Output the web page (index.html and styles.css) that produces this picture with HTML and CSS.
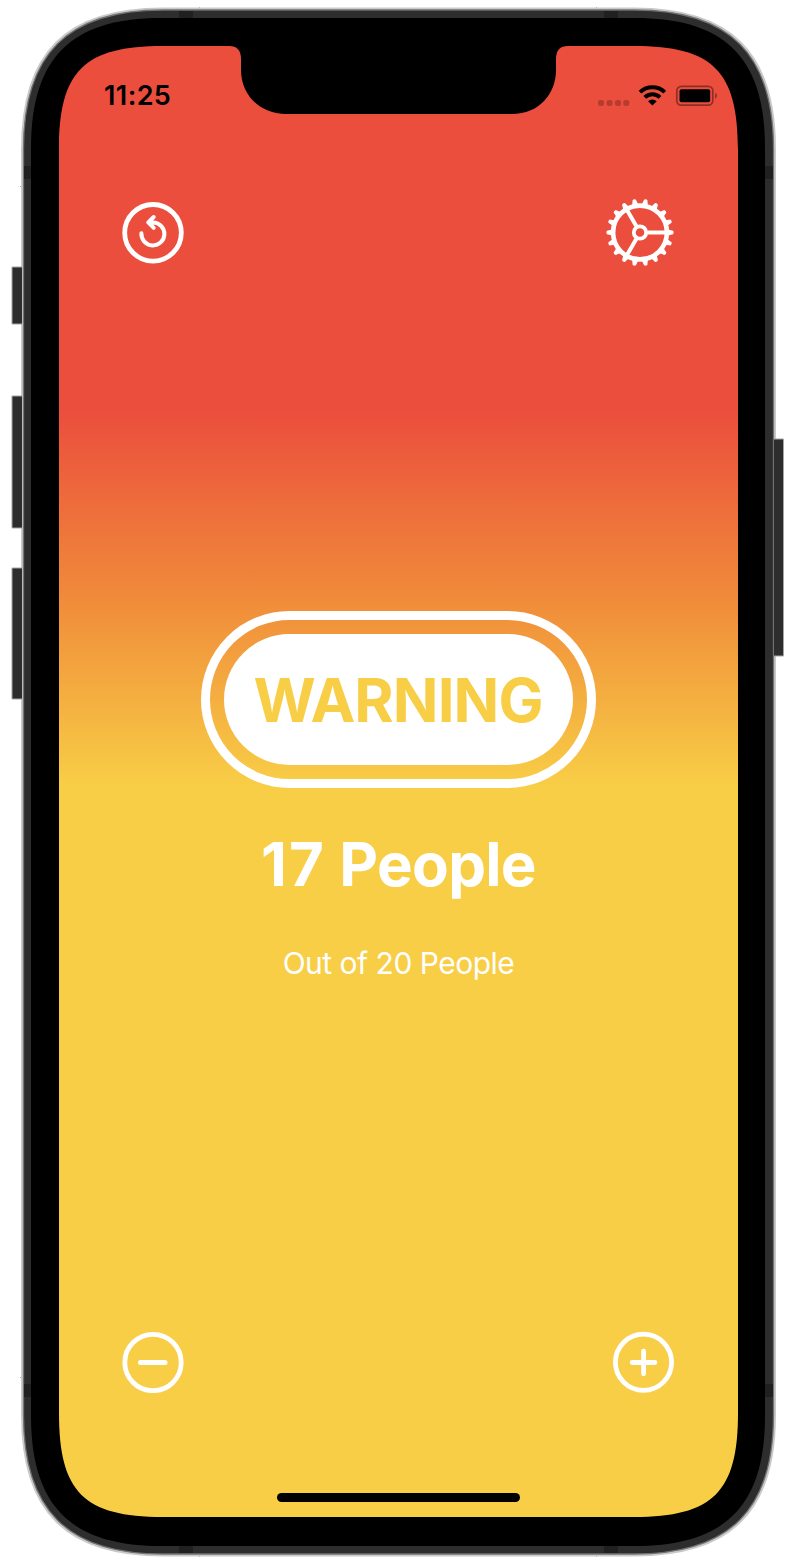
FILE: index.html
```html
<!DOCTYPE html>
<html lang="en">
<head>
<meta charset="utf-8">
<title>People Counter</title>
<link rel="stylesheet" href="styles.css">
</head>
<body>
<div class="device">
  <svg class="frame" width="796" height="1559" viewBox="0 0 796 1559" aria-hidden="true">
    <path d="M199.500 7v2M596.500 7v2M20 186.500h2M774 186.500h2M20 1377.500h2M774 1377.500h2M199.500 1555v2M596.500 1555v2" stroke="#aaa"/>
    <!-- shell -->
    <path d="M22.500 149C22.500 53 66.500 9 162.500 9H634.500C730.500 9 774.500 53 774.500 149V1415C774.500 1511 730.500 1555 634.500 1555H162.500C66.500 1555 22.500 1511 22.500 1415Z" fill="#2d2d2d" stroke="#c9c9c9" stroke-width="3"/>
    <path d="M23.500 149C23.500 54 67.500 10 162.500 10H634.500C729.500 10 773.500 54 773.500 149V1415C773.500 1510 729.500 1554 634.500 1554H162.500C67.500 1554 23.500 1510 23.500 1415Z" fill="#2d2d2d" stroke="#727272" stroke-width="1.300"/>
    <!-- side buttons -->
    <g fill="#2d2d2d">
      <g fill="#a5a5a5">
        <rect x="11.500" y="266.500" width="10.500" height="58" rx="1"/>
        <rect x="11.500" y="395.500" width="10.500" height="133" rx="1"/>
        <rect x="11.500" y="567.500" width="10.500" height="132" rx="1"/>
        <rect x="774" y="438.500" width="10" height="218" rx="1"/>
      </g>
      <rect x="12.500" y="267.500" width="9.500" height="56"/>
      <rect x="12.500" y="396.500" width="9.500" height="131"/>
      <rect x="12.500" y="568.500" width="9.500" height="130"/>
      <rect x="774" y="439.500" width="9" height="216"/>
    </g>
    <path d="M179 11h14v9h-14zM604 11h14v9h-14zM179 1544h14v9h-14zM604 1544h14v9h-14zM24 166h9v13h-9zM764 166h9v13h-9zM24 1384h9v13h-9zM764 1384h9v13h-9z" fill="#202020"/>
    <path d="M31 148C31 58 71 18 161 18H635C725 18 765 58 765 148V1416C765 1506 725 1546 635 1546H161C71 1546 31 1506 31 1416Z" fill="#000"/>
  </svg>
  <main class="screen">
    <header class="status">
      <span class="time">11:25</span>
      <svg class="indicators" width="122" height="24" viewBox="0 0 122 24">
        <g fill="#000" fill-opacity=".22">
          <rect x="1" y="15" width="6" height="6" rx="2"/><rect x="9.500" y="15" width="6" height="6" rx="2"/><rect x="18" y="15" width="6" height="6" rx="2"/><rect x="26.300" y="15" width="6" height="6" rx="2"/>
        </g>
        <g fill="none" stroke="#000" stroke-width="3.900">
          <path d="M43 7.200A18 18 0 0 1 67.800 7.200"/>
          <path d="M47.800 12.300A10.900 10.900 0 0 1 63 12.300"/>
        </g>
        <path d="M55.400 20.600L51.100 16.300A6.200 6.200 0 0 1 59.700 16.300Z"/>
        <rect x="79.800" y="1.300" width="36" height="18.800" rx="4.500" fill="none" stroke="#000" stroke-opacity=".4" stroke-width="1.700"/>
        <rect x="82.500" y="4.200" width="30.700" height="13" rx="2"/>
        <path d="M118.300 7.400a4.200 4.200 0 0 1 0 6.600z" fill="#000" fill-opacity=".45"/>
      </svg>
    </header>
    <nav class="actions top">
      <button class="icon" aria-label="Reset">
        <svg width="62" height="62" viewBox="0 0 62 62"><g fill="none" stroke="#fff" stroke-linecap="round" stroke-linejoin="round"><circle cx="31" cy="30.800" r="28.300" stroke-width="4.800"/><path d="M19.400 31.200A11.500 11.500 0 1 0 31.200 20.400H27.500M31.700 15L26.200 20.400L31.700 25.900" stroke-width="4"/></g></svg>
      </button>
      <button class="icon" aria-label="Settings">
        <svg width="68" height="68" viewBox="-34 -33.500 68 68">
          <defs><path id="tooth" d="M27 -3.700L30 -2.500L33 -1.700Q34.300 0 33 1.700L30 2.500L27 3.700Z"/></defs>
          <g fill="none" stroke="#fff"><circle r="26.900" stroke-width="4.600"/><circle r="6.200" stroke-width="3.800"/><path d="M7.500 0H26M-3.750 -6.500L-13 -22.500M-3.750 6.500L-13 22.500" stroke-width="4"/></g>
          <g id="teeth" fill="#fff">
            <use href="#tooth"/><use href="#tooth" transform="rotate(20)"/><use href="#tooth" transform="rotate(40)"/><use href="#tooth" transform="rotate(60)"/><use href="#tooth" transform="rotate(80)"/><use href="#tooth" transform="rotate(100)"/><use href="#tooth" transform="rotate(120)"/><use href="#tooth" transform="rotate(140)"/><use href="#tooth" transform="rotate(160)"/><use href="#tooth" transform="rotate(180)"/><use href="#tooth" transform="rotate(200)"/><use href="#tooth" transform="rotate(220)"/><use href="#tooth" transform="rotate(240)"/><use href="#tooth" transform="rotate(260)"/><use href="#tooth" transform="rotate(280)"/><use href="#tooth" transform="rotate(300)"/><use href="#tooth" transform="rotate(320)"/><use href="#tooth" transform="rotate(340)"/>
          </g>
        </svg>
      </button>
    </nav>
    <section class="counter">
      <div class="badge"><div class="pill"><span class="state">WARNING</span></div></div>
      <h1 class="count"><span class="number">17</span> People</h1>
      <p class="limit">Out of 20 People</p>
    </section>
    <nav class="actions bottom">
      <button class="icon" aria-label="Remove one">
        <svg width="62" height="62" viewBox="0 0 62 62"><g fill="none" stroke="#fff" stroke-linecap="round"><circle cx="31" cy="31.500" r="28.200" stroke-width="4.800"/><path d="M18.500 31.500H43" stroke-width="5"/></g></svg>
      </button>
      <button class="icon" aria-label="Add one">
        <svg width="62" height="62" viewBox="0 0 62 62"><g fill="none" stroke="#fff" stroke-linecap="round"><circle cx="31.500" cy="31.300" r="28.100" stroke-width="4.800"/><path d="M20.200 31.500H42.900M31.600 20.200V42.800" stroke-width="4.800"/></g></svg>
      </button>
    </nav>
    <div class="home"></div>
  </main>
</div>
</body>
</html>
```
FILE: styles.css
```css
body {
  margin: 0;
  background: #fff;
  font-family: Inter, "Liberation Sans", sans-serif;
}
.device {
  display: grid;
  width: 796px;
  height: 1559px;
  overflow: hidden;
}
.frame,
.screen {
  grid-area: 1 / 1;
}
.screen {
  display: flex;
  flex-direction: column;
  box-sizing: border-box;
  width: 679px;
  height: 1471px;
  margin: 46px 0 0 59px;
  background: linear-gradient(#eb4e3d 365px, #f08a3a 550px, #f8ce46 740px);
  clip-path: path("M0 104C0 25 25 0 104 0H170Q182 0 182 13V24C182 48 200 68 227 68H453C480 68 497 48 497 24V13Q497 0 509 0H575C654 0 679 25 679 104V1367C679 1446 654 1471 575 1471H104C25 1471 0 1446 0 1367Z");
}
.status {
  display: flex;
  justify-content: space-between;
  align-items: center;
  height: 24px;
  padding: 39px 19px 0 45px;
}
.time {
  margin-top: -2px;
  font-size: 27px;
  font-weight: 600;
  line-height: 24px;
  letter-spacing: 0.4px;
}
.indicators {
  display: block;
}
.actions {
  display: flex;
  justify-content: space-between;
  align-items: center;
  height: 68px;
  padding: 0 64px 0 63px;
}
.top {
  margin-top: 90px;
}
.icon {
  display: block;
  padding: 0;
  border: 0;
  background: none;
}
.icon svg {
  display: block;
}
.counter {
  display: flex;
  flex-direction: column;
  align-items: center;
  height: 716.6px;
  padding-top: 344.4px;
  color: #fff;
}
.badge {
  box-sizing: border-box;
  width: 395px;
  height: 177px;
  padding: 14px;
  border: 9px solid #fff;
  border-radius: 89px;
}
.pill {
  display: flex;
  align-items: center;
  justify-content: center;
  height: 131px;
  border-radius: 66px;
  background: #fff;
}
.state {
  margin-right: 1px;
  color: #f8ce46;
  font-size: 60px;
  font-weight: 700;
  line-height: 72px;
  letter-spacing: -0.9px;
}
.count {
  margin: 39.6px 0 0;
  font-size: 60px;
  font-weight: 700;
  line-height: 72px;
  letter-spacing: -0.7px;
}
.number {
  letter-spacing: 2px;
  font-kerning: none;
}
.limit {
  margin: 45px 0 0;
  font-size: 30px;
  font-weight: 400;
  line-height: 36px;
  letter-spacing: -0.5px;
}
.home {
  align-self: center;
  width: 243px;
  height: 9px;
  margin-top: 97px;
  border-radius: 5px;
  background: #000;
}
```
